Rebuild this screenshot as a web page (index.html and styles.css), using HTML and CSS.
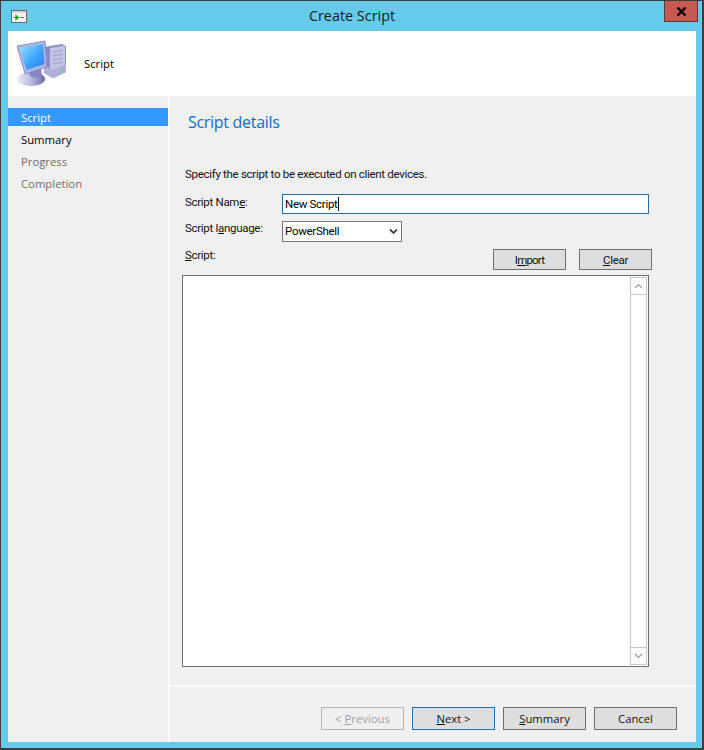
FILE: index.html
```html
<!DOCTYPE html>
<html lang="en">
<head>
<meta charset="utf-8">
<title>Create Script</title>
<link rel="stylesheet" href="styles.css">
</head>
<body>
<div class="window">
  <header class="titlebar">
    <div class="title-left">
      <svg class="app-icon" width="16" height="14" viewBox="0 0 16 14">
        <rect x="0.5" y="0.5" width="15" height="12" fill="#f4f4f4" stroke="#6a6a6a"/>
        <rect x="1" y="1" width="14" height="2" fill="#d8d8d8"/>
        <path d="M3 7.5h3M5 5.500l2.500 2-2.500 2z" stroke="#23a823" stroke-width="1.200" fill="#23a823"/>
        <path d="M9 7.500h4" stroke="#777" stroke-width="1"/>
      </svg>
    </div>
    <div class="title-text">Create Script</div>
    <div class="title-right"><button class="close" type="button" aria-label="Close">
      <svg width="11" height="9" viewBox="0 0 11 9"><path d="M1.500 0.500 L9.500 8.500 M9.500 0.500 L1.500 8.500" stroke="#000" stroke-width="2.400"/></svg>
    </button></div>
  </header>
  <div class="client">
    <div class="banner">
      <svg class="computer" width="52" height="48" viewBox="0 0 52 48">
        <defs>
          <linearGradient id="scr" x1="0" y1="0" x2="1" y2="1"><stop offset="0" stop-color="#9be6ff"/><stop offset="0.55" stop-color="#3fa4ff"/><stop offset="1" stop-color="#2b7fe8"/></linearGradient>
          <linearGradient id="bas" x1="0" y1="0" x2="1" y2="0"><stop offset="0" stop-color="#eeeef6"/><stop offset="0.55" stop-color="#b4b4dc"/><stop offset="1" stop-color="#6a6aa8"/></linearGradient>
        </defs>
        <path d="M27 7 L45 4 L49 6 L49 32 L36 38 L27 33 Z" fill="#8d8dc6"/>
        <path d="M33 8 L48 5.500 L48 31 L36 36.500 L33 33 Z" fill="#c3c5e6"/>
        <path d="M36 12l10-2M36 16l10-2M36 20l10-2M36 24l10-2" stroke="#9a9ac8" stroke-width="1.200"/>
        <path d="M27 25 L36 30 L49 24 L49 32 L36 38 L27 33 Z" fill="#aeb0da"/>
        <circle cx="45" cy="30" r="1.200" fill="#5fd35f"/>
        <ellipse cx="14" cy="39" rx="14" ry="7" fill="url(#bas)"/>
        <path d="M12 30 L24 27 L25 37 Q18 39 13 36 Z" fill="#8585c4"/>
        <path d="M0 6 L28 1 L30 27 L8 34 Z" fill="#adb6e2" stroke="#7f7fb8" stroke-width="0.800"/>
        <path d="M3 8 L26 4 L27.500 24 L9.500 30 Z" fill="url(#scr)"/>
      </svg>
      <span class="banner-text">Script</span>
    </div>
    <div class="body">
      <nav class="nav">
        <div class="nav-item active">Script</div>
        <div class="nav-item">Summary</div>
        <div class="nav-item muted">Progress</div>
        <div class="nav-item muted">Completion</div>
      </nav>
      <main class="main">
        <section class="content">
          <h1 class="heading">Script details</h1>
          <p class="intro">Specify the script to be executed on client devices.</p>
          <div class="row row-name">
            <label class="label">Script Nam<u>e</u>:</label>
            <div class="input">New Script<span class="caret"></span></div>
          </div>
          <div class="row row-lang">
            <label class="label">Script l<u>a</u>nguage:</label>
            <div class="select">PowerShell
              <svg class="select-arrow" width="9" height="7" viewBox="0 0 9 7"><path d="M1 1.500 L4.500 5 L8 1.500" fill="none" stroke="#444" stroke-width="1.800"/></svg>
            </div>
          </div>
          <div class="row row-script">
            <label class="label"><u>S</u>cript:</label>
            <div class="script-actions">
              <button class="btn small import" type="button">I<u>m</u>port</button>
              <button class="btn small" type="button"><u>C</u>lear</button>
            </div>
          </div>
          <div class="editor">
            <div class="scrollbar">
              <div class="scroll-btn"><svg width="9" height="6" viewBox="0 0 9 6"><path d="M1 5 L4.500 1.500 L8 5" fill="none" stroke="#a0a0a0" stroke-width="1.200"/></svg></div>
              <div class="scroll-track"></div>
              <div class="scroll-btn"><svg width="9" height="6" viewBox="0 0 9 6"><path d="M1 1 L4.500 4.500 L8 1" fill="none" stroke="#a0a0a0" stroke-width="1.200"/></svg></div>
            </div>
          </div>
        </section>
        <footer class="footer">
          <button class="btn disabled" type="button">&lt; <u>P</u>revious</button>
          <button class="btn default" type="button"><u>N</u>ext &gt;</button>
          <button class="btn" type="button"><u>S</u>ummary</button>
          <button class="btn" type="button">Cancel</button>
        </footer>
      </main>
    </div>
  </div>
</div>
</body>
</html>
```
FILE: styles.css
```css
* { box-sizing: border-box; }
html, body { margin: 0; padding: 0; }
body {
  width: 704px;
  height: 750px;
  overflow: hidden;
  font-family: "Open Sans", "Noto Sans", "Liberation Sans", sans-serif;
  font-size: 11.3px;
  color: #000;
}
.window {
  width: 704px;
  height: 750px;
  display: flex;
  flex-direction: column;
  background: #66cbea;
  border: 1px solid #3c3f42;
  border-bottom-width: 2px;
  border-right-width: 2px;
  padding: 0 6px 6px 7px;
}
.titlebar {
  height: 30px;
  flex: none;
  display: grid;
  grid-template-columns: 1fr auto 1fr;
}
.title-left { padding: 9px 0 0 3px; }
.app-icon { display: block; }
.title-text {
  font-size: 14.4px;
  line-height: 30px;
  color: #1a1a1a;
}
.title-right { display: flex; justify-content: flex-end; }
.close {
  width: 34px;
  height: 21px;
  margin: 0 -2px 0 0;
  padding: 0;
  background: #c75a50;
  border: 1px solid #5b3a38;
  border-top: none;
  display: flex;
  align-items: center;
  justify-content: center;
}
.client {
  flex: 1;
  display: flex;
  flex-direction: column;
  min-height: 0;
}
.banner {
  height: 65px;
  flex: none;
  background: #fff;
  display: flex;
  align-items: center;
  padding-left: 9px;
}
.computer { display: block; margin-top: 1px; }
.banner-text { margin-left: 15px; }
.body {
  flex: 1;
  display: flex;
  min-height: 0;
  background: #fafafa;
}
.nav {
  width: 160px;
  flex: none;
  background: #f0f0f0;
  padding-top: 12px;
  display: flex;
  flex-direction: column;
  gap: 4px;
}
.nav-item {
  height: 18px;
  line-height: 20px;
  padding-left: 13px;
}
.nav-item.active { background: #3399ff; color: #fff; }
.nav-item.muted { color: #6d6d6d; }
.main {
  margin-left: 2px;
  flex: 1;
  display: flex;
  flex-direction: column;
  background: #f0f0f0;
  min-width: 0;
}
.content {
  flex: 1;
  padding: 15px 0 0 12px;
  min-height: 0;
  border-bottom: 1px solid #fafafa;
  font-family: Roboto, "Open Sans", sans-serif;
  font-size: 11.5px;
  letter-spacing: -0.3px;
}
.heading {
  margin: 0 0 0 6px;
  font-family: "Open Sans", sans-serif;
  font-size: 16px;
  font-weight: 400;
  line-height: 22px;
  letter-spacing: -0.3px;
  color: #0f6ccb;
}
.intro {
  margin: 32px 0 0 3px;
  line-height: 18px;
  color: #111;
}
.row {
  display: flex;
  margin-left: 3px;
}
.label {
  width: 97px;
  flex: none;
  line-height: 16px;
  color: #111;
}
.row-name { margin-top: 11px; height: 20px; }
.row-lang { margin-top: 7px; height: 21px; }
.row-script { margin-top: 7px; height: 26px; justify-content: space-between; width: 467px; }
.row-lang .label { margin-top: -1px; }
.input {
  width: 367px;
  height: 20px;
  background: #fff;
  border: 1px solid #2a6a9c;
  line-height: 18px;
  padding-left: 2px;
  display: flex;
  align-items: center;
}
.caret {
  display: inline-block;
  width: 1px;
  height: 14px;
  background: #000;
}
.select {
  width: 120px;
  height: 21px;
  background: #fff;
  border: 1px solid #767676;
  line-height: 19px;
  padding-left: 2px;
  display: flex;
  align-items: center;
  justify-content: space-between;
  padding-right: 3px;
}
.select-arrow { display: block; }
.row-script .label { margin-top: -2px; }
.script-actions {
  display: flex;
  gap: 13px;
  flex: none;
}
.btn {
  width: 83px;
  height: 23px;
  padding: 0;
  font: inherit;
  letter-spacing: inherit;
  color: #111;
  background: #dedede;
  border: 1px solid #707070;
  line-height: 20px;
}
.btn.small { width: 73px; height: 21px; line-height: 18px; flex: none; }
.btn.import { letter-spacing: -0.8px; }
.btn.default { border-color: #2a70ad; }
.btn.disabled { color: #a0a0a0; border-color: #b4b4b4; background: #efefef; }
.editor {
  width: 467px;
  height: 392px;
  margin-top: 0;
  background: #fff;
  border: 1px solid #6f6f6f;
  display: flex;
  justify-content: flex-end;
  padding: 1px;
}
.scrollbar {
  width: 17px;
  display: flex;
  flex-direction: column;
  border: 1px solid #c8c8c8;
  background: #fff;
}
.scroll-btn {
  height: 16px;
  flex: none;
  display: flex;
  align-items: center;
  justify-content: center;
}
.scroll-track {
  flex: 1;
  border-top: 1px solid #c8c8c8;
  border-bottom: 1px solid #c8c8c8;
}
.footer {
  height: 56px;
  flex: none;
  display: flex;
  justify-content: flex-end;
  gap: 8px;
  padding: 20px 19px 0 0;
  border-top: 1px solid #fafafa;
}
u { text-underline-offset: 1px; text-decoration-skip-ink: none; }
```
